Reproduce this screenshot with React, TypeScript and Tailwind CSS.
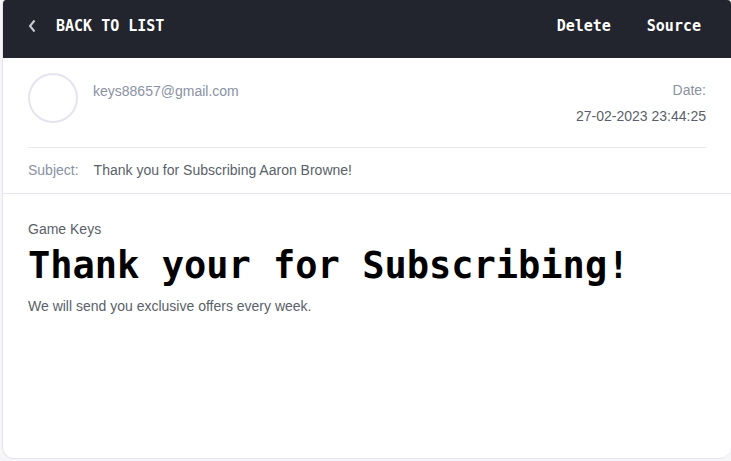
function BackArrow() {
  return (
    <svg width="8" height="14" viewBox="0 0 8 14" fill="none" aria-hidden="true">
      <path d="M6.5 1.5 L2 7 L6.5 12.5" stroke="#c9ccd3" strokeWidth="2" />
    </svg>
  );
}

const navText = "font-['DejaVu_Sans_Mono',monospace] text-[15px] leading-5 font-bold text-white";

export default function App() {
  return (
    <div className="min-h-screen bg-[#f6f6f8] pb-0.5 pl-0.5 font-['Liberation_Sans',sans-serif] text-sm leading-5 text-[#5a5f69]">
      <main className="flex min-h-[calc(100vh-2px)] flex-col overflow-hidden rounded-t-sm rounded-b-xl border-b border-l border-[#e4e4f0] bg-white">
        <header className="flex h-[58px] items-center justify-between bg-[#22252d] pr-[30px] pb-1.5 pl-[25px]">
          <button className={`flex items-center gap-5 ${navText}`}>
            <BackArrow />
            BACK TO LIST
          </button>
          <nav className="flex gap-9" aria-label="Message actions">
            <button className={navText}>Delete</button>
            <button className={navText}>Source</button>
          </nav>
        </header>

        <section className="mx-[25px] flex h-[90px] justify-between border-b border-[#e9e9ec] pt-[15px]">
          <div className="flex gap-[15px]">
            <div className="size-[50px] shrink-0 rounded-full border-2 border-[#e5e4ee]" />
            <p className="pt-2 text-[#8a91a2]">keys88657@gmail.com</p>
          </div>
          <div className="pt-1 text-right leading-[26px]">
            <p className="text-[#8a91a2]">Date:</p>
            <time dateTime="2023-02-27T23:44:25">27-02-2023 23:44:25</time>
          </div>
        </section>

        <section className="flex h-[46px] items-center gap-[15px] border-b border-[#e6e6f0] px-[25px] pb-0.5">
          <span className="text-[#8a91a2]">Subject:</span>
          <span>Thank you for Subscribing Aaron Browne!</span>
        </section>

        <article className="flex-1 px-[25px] pt-[25px]">
          <p>Game Keys</p>
          <h1 className="mb-1 font-['DejaVu_Sans_Mono',monospace] text-[37px] leading-[53px] font-bold text-black">
            Thank your for Subscribing!
          </h1>
          <p>We will send you exclusive offers every week.</p>
        </article>
      </main>
    </div>
  );
}
